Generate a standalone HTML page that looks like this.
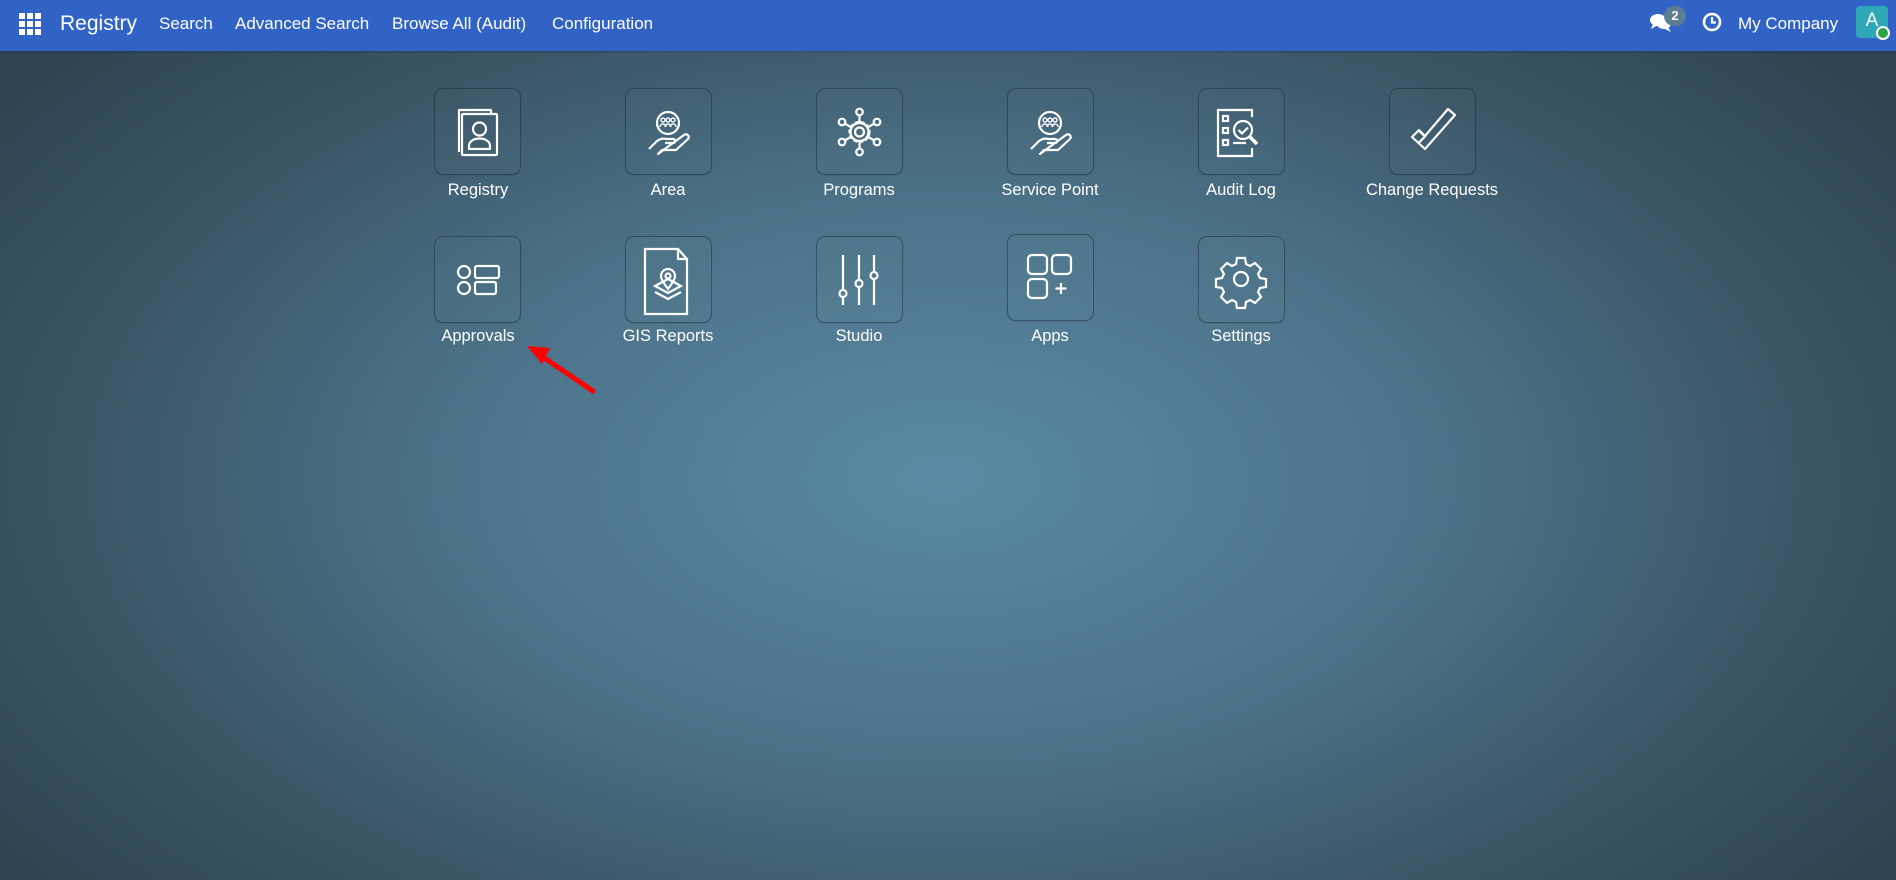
<!DOCTYPE html>
<html><head><meta charset="utf-8">
<style>
*{box-sizing:border-box;margin:0;padding:0}
body{width:1896px;height:880px;overflow:hidden;font-family:"Liberation Sans",sans-serif;
background:radial-gradient(ellipse 1150px 640px at 943px 478px,#5a8aa3 0%,#4b7187 45%,#3a5566 75%,#2f4652 100%);position:relative}
.nav{position:absolute;left:0;top:0;width:1896px;height:51px;background:#3163c7;color:#fff;box-shadow:0 1px 2px rgba(0,0,0,.2)}
.nav span{position:absolute;top:14px;font-size:17px;white-space:nowrap}
.box{position:absolute;width:87px;height:87px;border-radius:9px;background:rgba(255,255,255,.015);border:1px solid rgba(25,40,52,.5);box-shadow:0 1px 1px rgba(0,0,0,.08)}
.box svg{position:absolute;left:-1px;top:-1px}
.lbl{position:absolute;width:200px;text-align:center;color:#fff;font-size:16.5px}
</style></head><body>
<div class="nav">
<svg style="position:absolute;left:19px;top:13px" width="22" height="22" viewBox="0 0 22 22" fill="#fff">
<rect x="0" y="0" width="6" height="6"/><rect x="8" y="0" width="6" height="6"/><rect x="16" y="0" width="6" height="6"/>
<rect x="0" y="8" width="6" height="6"/><rect x="8" y="8" width="6" height="6"/><rect x="16" y="8" width="6" height="6"/>
<rect x="0" y="16" width="6" height="6"/><rect x="8" y="16" width="6" height="6"/><rect x="16" y="16" width="6" height="6"/></svg>
<span style="left:60px;top:12px;font-size:21px">Registry</span>
<span style="left:159px">Search</span>
<span style="left:235px">Advanced Search</span>
<span style="left:392px">Browse All (Audit)</span>
<span style="left:552px">Configuration</span>
<svg style="position:absolute;left:1649px;top:12px" width="24" height="22" viewBox="0 0 24 22" fill="#fff">
<ellipse cx="9" cy="8" rx="8" ry="6"/><path d="M4 12 L2 17 L9 13Z"/><ellipse cx="15" cy="12" rx="7" ry="5"/><path d="M19 15 L22 20 L14 16Z"/></svg>
<div style="position:absolute;left:1664px;top:6px;width:22px;height:20px;border-radius:10px;background:#5a7d94;color:#fff;font-size:13px;font-weight:bold;text-align:center;line-height:20px">2</div>
<svg style="position:absolute;left:1702px;top:12px" width="20" height="20" viewBox="0 0 20 20"><circle cx="10" cy="10" r="8" fill="none" stroke="#fff" stroke-width="2.6"/><path d="M10 5V10.5H14" fill="none" stroke="#fff" stroke-width="2.2"/></svg>
<span style="left:1738px">My Company</span>
<div style="position:absolute;left:1856px;top:6px;width:32px;height:32px;border-radius:4px;background:#2ea8b6;color:#fff;font-size:19px;text-align:center;line-height:30px">A</div>
<div style="position:absolute;left:1876px;top:26px;width:14px;height:14px;border-radius:50%;background:#28a745;border:2px solid #fff"></div>
</div>

<!-- Row 1 -->
<div class="box" style="left:434px;top:88px"><svg width="87" height="87" viewBox="0 0 87 87" fill="none" stroke="#fff" stroke-width="2.2" stroke-linejoin="round"><path d="M25 64V22H57V26"/><rect x="28" y="26" width="35" height="41" rx="1"/><circle cx="45.5" cy="41" r="6.5"/><path d="M35 61v-3c0-10 21-10 21 0v3z"/></svg></div>
<div class="lbl" style="left:378px;top:181px">Registry</div>

<div class="box" style="left:625px;top:88px"><svg width="87" height="87" viewBox="0 0 87 87" fill="none" stroke="#fff" stroke-width="2.2" stroke-linejoin="round"><circle cx="43" cy="35" r="11"/><g stroke-width="1.4"><circle cx="38" cy="32" r="2"/><circle cx="43" cy="32" r="2"/><circle cx="48" cy="32" r="2"/><path d="M35 39c0-4 6-4 6 0M40 39c0-4 6-4 6 0M45 39c0-4 6-4 6 0"/></g><path d="M24 61l8-8c3-2 6-3 9-2h7c3 0 3 4 0 4h-8M48 55l11-8c3-2 6 1 4 4L51 62H37l-4 4z"/></svg></div>
<div class="lbl" style="left:568px;top:181px">Area</div>

<div class="box" style="left:816px;top:88px"><svg width="87" height="87" viewBox="0 0 87 87" fill="none" stroke="#fff" stroke-width="2.2"><circle cx="43.5" cy="44" r="4.5"/><circle cx="43.5" cy="44" r="10" stroke-dasharray="4 2"/><circle cx="43.5" cy="44" r="9"/><g><circle cx="43.5" cy="24" r="3.3"/><circle cx="43.5" cy="64" r="3.3"/><circle cx="26" cy="34" r="3.3"/><circle cx="61" cy="34" r="3.3"/><circle cx="26" cy="54" r="3.3"/><circle cx="61" cy="54" r="3.3"/></g><path d="M43.5 27.3v7.7M43.5 53v7.7M29 35.7l6.5 3.8M58 35.7l-6.5 3.8M29 52.3l6.5-3.8M58 52.3l-6.5-3.8"/></svg></div>
<div class="lbl" style="left:759px;top:181px">Programs</div>

<div class="box" style="left:1007px;top:88px"><svg width="87" height="87" viewBox="0 0 87 87" fill="none" stroke="#fff" stroke-width="2.2" stroke-linejoin="round"><circle cx="43" cy="35" r="11"/><g stroke-width="1.4"><circle cx="38" cy="32" r="2"/><circle cx="43" cy="32" r="2"/><circle cx="48" cy="32" r="2"/><path d="M35 39c0-4 6-4 6 0M40 39c0-4 6-4 6 0M45 39c0-4 6-4 6 0"/></g><path d="M24 61l8-8c3-2 6-3 9-2h7c3 0 3 4 0 4h-8M48 55l11-8c3-2 6 1 4 4L51 62H37l-4 4z"/></svg></div>
<div class="lbl" style="left:950px;top:181px">Service Point</div>

<div class="box" style="left:1198px;top:88px"><svg width="87" height="87" viewBox="0 0 87 87" fill="none" stroke="#fff" stroke-width="2.2"><path d="M54 29V22H20v46h34V60"/><rect x="25" y="28" width="5" height="5"/><rect x="25" y="40" width="5" height="5"/><rect x="25" y="52" width="5" height="5"/><path d="M35 55h13"/><circle cx="45" cy="42" r="9"/><path d="M40.5 42l3.5 3.5 6-6"/><path d="M52 49l7 7" stroke-width="3.5"/></svg></div>
<div class="lbl" style="left:1141px;top:181px">Audit Log</div>

<div class="box" style="left:1389px;top:88px"><svg width="87" height="87" viewBox="0 0 87 87" fill="none" stroke="#fff" stroke-width="2.2" stroke-linejoin="round"><path d="M23 49l13 12 30-34-7-6-23 27-6-6z"/><path d="M30 43l6 5.5-6.5 6.5"/></svg></div>
<div class="lbl" style="left:1332px;top:181px">Change Requests</div>

<!-- Row 2 -->
<div class="box" style="left:434px;top:236px"><svg width="87" height="87" viewBox="0 0 87 87" fill="none" stroke="#fff" stroke-width="2.2"><circle cx="30" cy="36" r="6"/><circle cx="30" cy="52" r="6"/><rect x="41" y="30" width="24" height="12" rx="2"/><rect x="41" y="46" width="21" height="12" rx="2"/></svg></div>
<div class="lbl" style="left:378px;top:327px">Approvals</div>

<div class="box" style="left:625px;top:236px"><svg width="87" height="87" viewBox="0 0 87 87" fill="none" stroke="#fff" stroke-width="2.2"><path d="M20 13h33l9 10v55H20z"/><path d="M53 13v10h9"/><path d="M30 50l13-7 13 7-13 7z"/><path d="M30 56l13 7 13-7"/><path d="M43 53c-5-7-7-10-7-13a7 7 0 0114 0c0 3-2 6-7 13z"/><circle cx="43" cy="40" r="2.5"/></svg></div>
<div class="lbl" style="left:568px;top:327px">GIS Reports</div>

<div class="box" style="left:816px;top:236px"><svg width="87" height="87" viewBox="0 0 87 87" fill="none" stroke="#fff" stroke-width="2.2"><path d="M27 19v35M27 61v8M43 19v25M43 51v18M58 19v17M58 43v26"/><circle cx="27" cy="57.5" r="3.5"/><circle cx="43" cy="47.5" r="3.5"/><circle cx="58" cy="39.5" r="3.5"/></svg></div>
<div class="lbl" style="left:759px;top:327px">Studio</div>

<div class="box" style="left:1007px;top:234px"><svg width="87" height="87" viewBox="0 0 87 87" fill="none" stroke="#fff" stroke-width="2.2"><rect x="21" y="21" width="19" height="19" rx="4"/><rect x="45" y="21" width="19" height="19" rx="4"/><rect x="21" y="45" width="19" height="19" rx="4"/><path d="M54 49v11M48.5 54.5h11"/></svg></div>
<div class="lbl" style="left:950px;top:327px">Apps</div>

<div class="box" style="left:1198px;top:236px"><svg width="87" height="87" viewBox="0 0 87 87" fill="none" stroke="#fff" stroke-width="2.2"><circle cx="43" cy="43" r="7"/><path d="M39 22h8l1 6 4 2 5-3 6 6-3 5 2 4 6 1v8l-6 1-2 4 3 5-6 6-5-3-4 2-1 6h-8l-1-6-4-2-5 3-6-6 3-5-2-4-6-1v-8l6-1 2-4-3-5 6-6 5 3 4-2z"/></svg></div>
<div class="lbl" style="left:1141px;top:327px">Settings</div>

<svg style="position:absolute;left:0;top:0" width="1896" height="880"><path d="M593 391L540 355" stroke="#ff0000" stroke-width="5" stroke-linecap="round"/><path d="M527 346L550 348L542 364Z" fill="#ff0000"/></svg>
</body></html>
